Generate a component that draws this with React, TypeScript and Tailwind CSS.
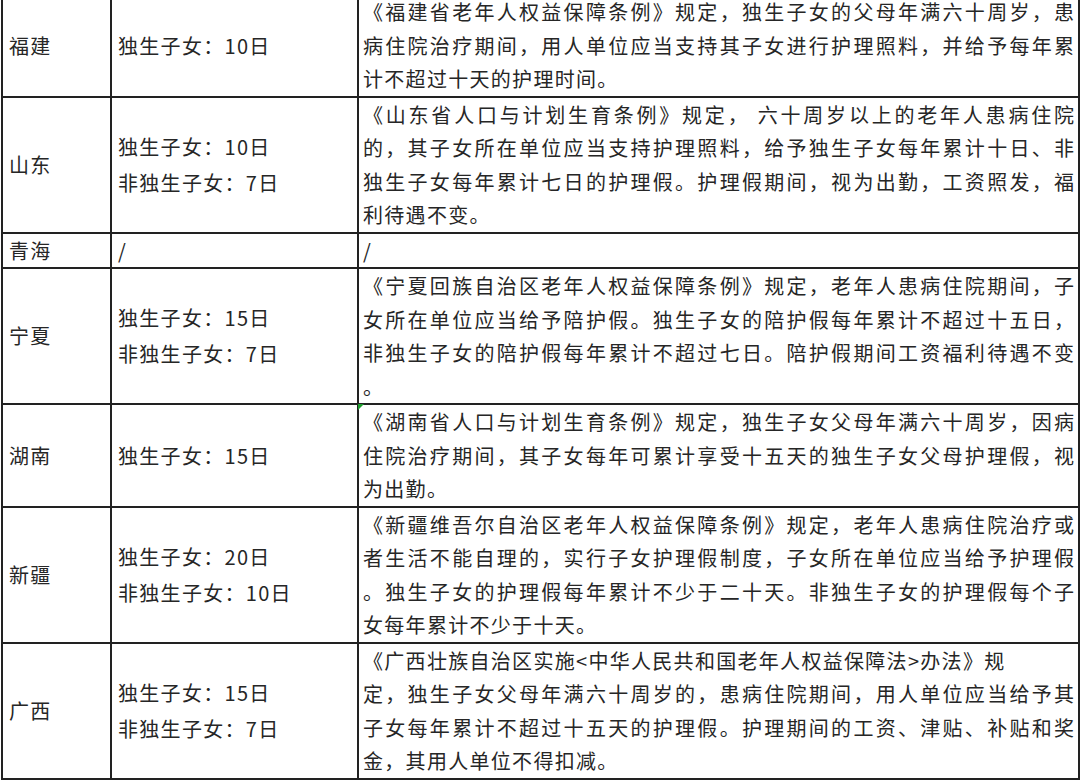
type Row = {
  region: string;
  days: string[];
  lines: string[];
  // how many lines at the top of the cell run the full width
  fullCount: number;
  mark?: boolean;
};

const rows: Row[] = [
  {
    region: "福建",
    days: ["独生子女：10日"],
    lines: [
      "《福建省老年人权益保障条例》规定，独生子女的父母年满六十周岁，患",
      "病住院治疗期间，用人单位应当支持其子女进行护理照料，并给予每年累",
      "计不超过十天的护理时间。",
    ],
    fullCount: 2,
  },
  {
    region: "山东",
    days: ["独生子女：10日", "非独生子女：7日"],
    lines: [
      "《山东省人口与计划生育条例》规定， 六十周岁以上的老年人患病住院",
      "的，其子女所在单位应当支持护理照料，给予独生子女每年累计十日、非",
      "独生子女每年累计七日的护理假。护理假期间，视为出勤，工资照发，福",
      "利待遇不变。",
    ],
    fullCount: 3,
  },
  {
    region: "青海",
    days: ["/"],
    lines: ["/"],
    fullCount: 0,
  },
  {
    region: "宁夏",
    days: ["独生子女：15日", "非独生子女：7日"],
    lines: [
      "《宁夏回族自治区老年人权益保障条例》规定，老年人患病住院期间，子",
      "女所在单位应当给予陪护假。独生子女的陪护假每年累计不超过十五日，",
      "非独生子女的陪护假每年累计不超过七日。陪护假期间工资福利待遇不变",
      "。",
    ],
    fullCount: 3,
  },
  {
    region: "湖南",
    days: ["独生子女：15日"],
    lines: [
      "《湖南省人口与计划生育条例》规定，独生子女父母年满六十周岁，因病",
      "住院治疗期间，其子女每年可累计享受十五天的独生子女父母护理假，视",
      "为出勤。",
    ],
    fullCount: 2,
    mark: true,
  },
  {
    region: "新疆",
    days: ["独生子女：20日", "非独生子女：10日"],
    lines: [
      "《新疆维吾尔自治区老年人权益保障条例》规定，老年人患病住院治疗或",
      "者生活不能自理的，实行子女护理假制度，子女所在单位应当给予护理假",
      "。独生子女的护理假每年累计不少于二十天。非独生子女的护理假每个子",
      "女每年累计不少于十天。",
    ],
    fullCount: 3,
  },
  {
    region: "广西",
    days: ["独生子女：15日", "非独生子女：7日"],
    lines: [
      "《广西壮族自治区实施<中华人民共和国老年人权益保障法>办法》规",
      "定，独生子女父母年满六十周岁的，患病住院期间，用人单位应当给予其",
      "子女每年累计不超过十五天的护理假。护理期间的工资、津贴、补贴和奖",
      "金，其用人单位不得扣减。",
    ],
    fullCount: 3,
  },
];

// 广西第一行不是满行
const isFull = (row: Row, i: number) => {
  if (row.region === "广西" && i === 0) return false;
  return i < row.fullCount;
};

export default function App() {
  return (
    <div className="min-h-screen w-[1080px] overflow-hidden bg-white">
      <table
        className="-mt-[7px] ml-[1px] w-[1077px] table-fixed border-collapse text-[20px] leading-[33.5px] tracking-[1.3px] text-[#262626]"
        style={{ fontFamily: '"Noto Sans CJK SC", "Noto Sans", sans-serif' }}
      >
        <colgroup>
          <col className="w-[109px]" />
          <col className="w-[247px]" />
          <col className="w-[721px]" />
        </colgroup>
        <tbody>
          {rows.map((row) => (
            <tr key={row.region}>
              {/* 地区 */}
              <td className="border-2 border-[#222] px-[6px] py-0 align-middle whitespace-nowrap">
                {row.region}
              </td>
              {/* 天数 */}
              <td className="border-2 border-[#222] pl-[6px] py-0 align-middle whitespace-nowrap">
                {row.days.map((d) => (
                  <div key={d} className={row.days.length > 1 ? "leading-[36px]" : ""}>
                    {d}
                  </div>
                ))}
              </td>
              {/* 规定 */}
              <td className="relative border-2 border-[#222] pl-[4px] pr-[4px] py-0 align-top">
                {row.mark && (
                  <span className="absolute -left-[1px] -top-[1px] h-0 w-0 border-t-[6px] border-r-[6px] border-t-[#1f9d2f] border-r-transparent" />
                )}
                {row.lines.map((line, i) => (
                  <div
                    key={i}
                    className={
                      isFull(row, i)
                        ? "whitespace-nowrap text-justify [text-align-last:justify] tracking-normal"
                        : "whitespace-nowrap"
                    }
                  >
                    {line}
                  </div>
                ))}
              </td>
            </tr>
          ))}
        </tbody>
      </table>
    </div>
  );
}
